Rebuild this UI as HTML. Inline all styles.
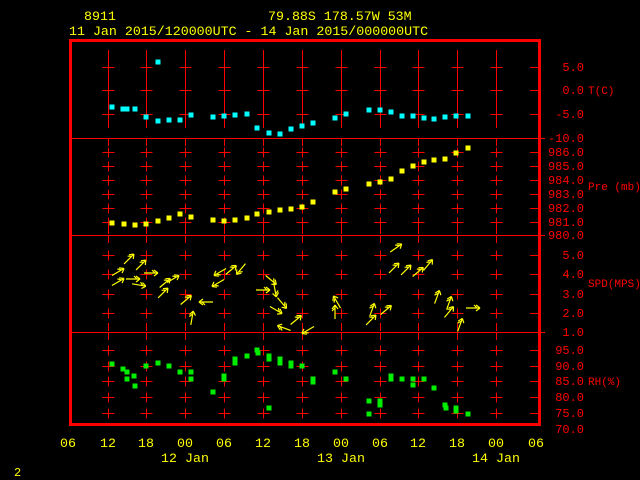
<!DOCTYPE html>
<html><head><style>
html,body{margin:0;padding:0;background:#000;width:640px;height:480px;overflow:hidden}
svg{display:block}
text{font-family:"Liberation Mono",monospace;}
</style></head><body>
<svg width="640" height="480" viewBox="0 0 640 480" xmlns="http://www.w3.org/2000/svg" shape-rendering="crispEdges">
<defs>
<path id="row" d="M102,0H114M108,-5V5M140,0H152M146,-5V5M179,0H191M185,-5V5M218,0H230M224,-5V5M257,0H269M263,-5V5M296,0H308M302,-5V5M335,0H347M341,-5V5M374,0H386M380,-5V5M412,0H424M418,-5V5M451,0H463M457,-5V5M490,0H502M496,-5V5" stroke="#f00" stroke-width="1" fill="none"/>
<path id="ar" d="M-7,0H7M7,0L3,-3M7,0L3,3M4,0L1,-3" stroke="#ff0" stroke-width="1.2" fill="none" shape-rendering="auto"/>
<rect id="sc" x="-2.5" y="-2.5" width="5" height="5" fill="#0ff"/>
<rect id="sy" x="-2.5" y="-2.5" width="5" height="5" fill="#ff0"/>
<rect id="sg" x="-2.5" y="-2.5" width="5" height="5" fill="#0e0"/>
</defs>
<g fill="#ff0" font-size="13.3">
<text x="84" y="20">8911</text>
<text x="268" y="20">79.88S  178.57W    53M</text>
<text x="69" y="35">11 Jan 2015/120000UTC - 14 Jan 2015/000000UTC</text>
</g>
<rect x="70.5" y="40.5" width="469" height="384" fill="none" stroke="#f00" stroke-width="3"/>
<path d="M71,138.5H545M71,235.5H545M71,332.5H545" stroke="#f00" stroke-width="1"/>
<g stroke="#f00" stroke-width="1">
<path d="M108.5,50V128M146.5,50V128M185.5,50V128M224.5,50V128M263.5,50V128M302.5,50V128M341.5,50V128M380.5,50V128M418.5,50V128M457.5,50V128M496.5,50V128"/>
<path d="M108.5,139V146M146.5,139V146M185.5,139V146M224.5,139V146M263.5,139V146M302.5,139V146M341.5,139V146M380.5,139V146M418.5,139V146M457.5,139V146M496.5,139V146"/>
<path d="M108.5,236V243M146.5,236V243M185.5,236V243M224.5,236V243M263.5,236V243M302.5,236V243M341.5,236V243M380.5,236V243M418.5,236V243M457.5,236V243M496.5,236V243"/>
<path d="M108.5,333V340M146.5,333V340M185.5,333V340M224.5,333V340M263.5,333V340M302.5,333V340M341.5,333V340M380.5,333V340M418.5,333V340M457.5,333V340M496.5,333V340"/>
<path d="M108.5,226V234M146.5,226V234M185.5,226V234M224.5,226V234M263.5,226V234M302.5,226V234M341.5,226V234M380.5,226V234M418.5,226V234M457.5,226V234M496.5,226V234"/>
<path d="M108.5,323V331M146.5,323V331M185.5,323V331M224.5,323V331M263.5,323V331M302.5,323V331M341.5,323V331M380.5,323V331M418.5,323V331M457.5,323V331M496.5,323V331"/>
<path d="M530,67.5H540M530,90.5H540M530,114.5H540M530,152.5H540M530,166.5H540M530,180.5H540M530,194.5H540M530,208.5H540M530,222.5H540M530,255.5H540M530,274.5H540M530,294.5H540M530,313.5H540M530,350.5H540M530,366.5H540M530,381.5H540M530,397.5H540M530,413.5H540"/>
</g>
<g transform="translate(0.5,0.5)">
<use href="#row" y="67"/><use href="#row" y="90"/><use href="#row" y="114"/>
<use href="#row" y="152"/><use href="#row" y="166"/><use href="#row" y="180"/><use href="#row" y="194"/><use href="#row" y="208"/><use href="#row" y="222"/>
<use href="#row" y="255"/><use href="#row" y="274"/><use href="#row" y="294"/><use href="#row" y="313"/>
<use href="#row" y="350"/><use href="#row" y="366"/><use href="#row" y="381"/><use href="#row" y="397"/><use href="#row" y="413"/>
</g>
<g fill="#f00" font-size="12" text-anchor="end">
<text x="584" y="71">5.0</text><text x="584" y="94">0.0</text><text x="584" y="118">-5.0</text><text x="584" y="142">-10.0</text>
<text x="584" y="156">986.0</text><text x="584" y="170">985.0</text><text x="584" y="184">984.0</text><text x="584" y="198">983.0</text><text x="584" y="212">982.0</text><text x="584" y="226">981.0</text><text x="584" y="239">980.0</text>
<text x="584" y="259">5.0</text><text x="584" y="278">4.0</text><text x="584" y="298">3.0</text><text x="584" y="317">2.0</text><text x="584" y="336">1.0</text>
<text x="584" y="354">95.0</text><text x="584" y="370">90.0</text><text x="584" y="385">85.0</text><text x="584" y="401">80.0</text><text x="584" y="417">75.0</text><text x="584" y="433">70.0</text>
</g>
<g fill="#f00" font-size="11">
<text x="588" y="94">T(C)</text><text x="588" y="190">Pre (mb)</text><text x="588" y="287">SPD(MPS)</text><text x="588" y="385">RH(%)</text>
</g>
<g fill="#ff0" font-size="13.3" text-anchor="middle">
<text x="68" y="447">06</text><text x="108" y="447">12</text><text x="146" y="447">18</text><text x="185" y="447">00</text><text x="224" y="447">06</text><text x="263" y="447">12</text><text x="302" y="447">18</text><text x="341" y="447">00</text><text x="380" y="447">06</text><text x="418" y="447">12</text><text x="457" y="447">18</text><text x="496" y="447">00</text><text x="536" y="447">06</text>
<text x="185" y="462">12 Jan</text><text x="341" y="462">13 Jan</text><text x="496" y="462">14 Jan</text>
</g>
<text x="14" y="476" fill="#ff0" font-size="12">2</text>
<g>
<use href="#sc" x="112" y="107"/><use href="#sc" x="123" y="109"/><use href="#sc" x="127" y="109"/><use href="#sc" x="135" y="109"/><use href="#sc" x="146" y="117"/><use href="#sc" x="158" y="62"/><use href="#sc" x="158" y="121"/><use href="#sc" x="169" y="120"/><use href="#sc" x="180" y="120"/><use href="#sc" x="191" y="115"/><use href="#sc" x="213" y="117"/><use href="#sc" x="224" y="116"/><use href="#sc" x="235" y="115"/><use href="#sc" x="247" y="114"/><use href="#sc" x="257" y="128"/><use href="#sc" x="269" y="133"/><use href="#sc" x="280" y="134"/><use href="#sc" x="291" y="129"/><use href="#sc" x="302" y="126"/><use href="#sc" x="313" y="123"/><use href="#sc" x="335" y="118"/><use href="#sc" x="346" y="114"/><use href="#sc" x="369" y="110"/><use href="#sc" x="380" y="110"/><use href="#sc" x="391" y="112"/><use href="#sc" x="402" y="116"/><use href="#sc" x="413" y="116"/><use href="#sc" x="424" y="118"/><use href="#sc" x="434" y="119"/><use href="#sc" x="445" y="117"/><use href="#sc" x="456" y="116"/><use href="#sc" x="468" y="116"/>
<use href="#sy" x="112" y="223"/><use href="#sy" x="124" y="224"/><use href="#sy" x="135" y="225"/><use href="#sy" x="146" y="224"/><use href="#sy" x="158" y="221"/><use href="#sy" x="169" y="218"/><use href="#sy" x="180" y="214"/><use href="#sy" x="191" y="217"/><use href="#sy" x="213" y="220"/><use href="#sy" x="224" y="221"/><use href="#sy" x="235" y="220"/><use href="#sy" x="247" y="218"/><use href="#sy" x="257" y="214"/><use href="#sy" x="269" y="212"/><use href="#sy" x="280" y="210"/><use href="#sy" x="291" y="209"/><use href="#sy" x="302" y="207"/><use href="#sy" x="313" y="202"/><use href="#sy" x="335" y="192"/><use href="#sy" x="346" y="189"/><use href="#sy" x="369" y="184"/><use href="#sy" x="380" y="182"/><use href="#sy" x="391" y="179"/><use href="#sy" x="402" y="171"/><use href="#sy" x="413" y="166"/><use href="#sy" x="424" y="162"/><use href="#sy" x="434" y="160"/><use href="#sy" x="445" y="159"/><use href="#sy" x="456" y="153"/><use href="#sy" x="468" y="148"/>
<use href="#sg" x="112" y="364"/><use href="#sg" x="123" y="369"/><use href="#sg" x="127" y="372"/><use href="#sg" x="127" y="379"/><use href="#sg" x="134" y="376"/><use href="#sg" x="135" y="386"/><use href="#sg" x="146" y="366"/><use href="#sg" x="158" y="363"/><use href="#sg" x="169" y="366"/><use href="#sg" x="180" y="372"/><use href="#sg" x="191" y="372"/><use href="#sg" x="191" y="379"/><use href="#sg" x="213" y="392"/><use href="#sg" x="224" y="376"/><use href="#sg" x="224" y="379"/><use href="#sg" x="235" y="359"/><use href="#sg" x="235" y="363"/><use href="#sg" x="247" y="356"/><use href="#sg" x="257" y="350"/><use href="#sg" x="258" y="353"/><use href="#sg" x="269" y="356"/><use href="#sg" x="269" y="359"/><use href="#sg" x="269" y="408"/><use href="#sg" x="280" y="359"/><use href="#sg" x="280" y="363"/><use href="#sg" x="291" y="363"/><use href="#sg" x="291" y="366"/><use href="#sg" x="302" y="366"/><use href="#sg" x="313" y="379"/><use href="#sg" x="313" y="382"/><use href="#sg" x="335" y="372"/><use href="#sg" x="346" y="379"/><use href="#sg" x="369" y="401"/><use href="#sg" x="369" y="414"/><use href="#sg" x="380" y="401"/><use href="#sg" x="380" y="405"/><use href="#sg" x="391" y="376"/><use href="#sg" x="391" y="379"/><use href="#sg" x="402" y="379"/><use href="#sg" x="413" y="379"/><use href="#sg" x="413" y="385"/><use href="#sg" x="424" y="379"/><use href="#sg" x="434" y="388"/><use href="#sg" x="445" y="405"/><use href="#sg" x="446" y="408"/><use href="#sg" x="456" y="408"/><use href="#sg" x="456" y="411"/><use href="#sg" x="468" y="414"/>
</g>
<g>
<use href="#ar" transform="translate(118,272) rotate(-30)"/><use href="#ar" transform="translate(129,259) rotate(-45)"/><use href="#ar" transform="translate(141,265) rotate(-45)"/><use href="#ar" transform="translate(151,273) rotate(0)"/><use href="#ar" transform="translate(118,282) rotate(-30)"/><use href="#ar" transform="translate(133,279) rotate(0)"/><use href="#ar" transform="translate(139,285) rotate(10)"/><use href="#ar" transform="translate(165,283) rotate(-40)"/><use href="#ar" transform="translate(173,279) rotate(-30)"/><use href="#ar" transform="translate(163,293) rotate(-45)"/><use href="#ar" transform="translate(186,300) rotate(-40)"/><use href="#ar" transform="translate(206,302) rotate(180)"/><use href="#ar" transform="translate(192,318) rotate(-80)"/><use href="#ar" transform="translate(220,272) rotate(150)"/><use href="#ar" transform="translate(231,270) rotate(-40)"/><use href="#ar" transform="translate(241,269) rotate(130)"/><use href="#ar" transform="translate(218,283) rotate(150)"/><use href="#ar" transform="translate(271,280) rotate(40)"/><use href="#ar" transform="translate(263,290) rotate(0)"/><use href="#ar" transform="translate(275,290) rotate(80)"/><use href="#ar" transform="translate(282,303) rotate(50)"/><use href="#ar" transform="translate(276,310) rotate(30)"/><use href="#ar" transform="translate(296,320) rotate(-40)"/><use href="#ar" transform="translate(284,328) rotate(200)"/><use href="#ar" transform="translate(308,330) rotate(150)"/><use href="#ar" transform="translate(337,302) rotate(-120)"/><use href="#ar" transform="translate(335,312) rotate(-90)"/><use href="#ar" transform="translate(372,310) rotate(-70)"/><use href="#ar" transform="translate(371,320) rotate(-45)"/><use href="#ar" transform="translate(386,310) rotate(-40)"/><use href="#ar" transform="translate(396,248) rotate(-35)"/><use href="#ar" transform="translate(394,268) rotate(-45)"/><use href="#ar" transform="translate(406,270) rotate(-45)"/><use href="#ar" transform="translate(418,272) rotate(-40)"/><use href="#ar" transform="translate(428,265) rotate(-50)"/><use href="#ar" transform="translate(437,297) rotate(-70)"/><use href="#ar" transform="translate(449,303) rotate(-70)"/><use href="#ar" transform="translate(449,312) rotate(-50)"/><use href="#ar" transform="translate(473,308) rotate(0)"/><use href="#ar" transform="translate(460,325) rotate(-70)"/>
</g>
</svg>
</body></html>
